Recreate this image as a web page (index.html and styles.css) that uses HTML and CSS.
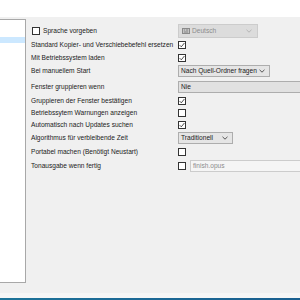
FILE: index.html
```html
<!DOCTYPE html>
<html lang="de">
<head>
<meta charset="utf-8">
<title>Optionen</title>
<link rel="stylesheet" href="styles.css">
</head>
<body>
<div class="window">
  <div class="topband"></div>
  <div class="content">
    <div class="tree">
      <div class="tree-item"></div>
    </div>
    <div class="form">
      <div class="label"><span class="check"></span><span>Sprache vorgeben</span></div>
      <div class="ctrl">
        <div class="combo combo-lang disabled">
          <svg class="lang-icon" width="8" height="6" viewBox="0 0 8 6"><rect x="0.5" y="0.5" width="7" height="5" fill="#c4c4c4" stroke="#8a8a8a"/><path d="M2 2h1M4 2h2M2 4h4" stroke="#7a7a7a" stroke-width="0.8"/></svg>
          <span class="combo-text">Deutsch</span>
          <svg class="chev" width="6" height="4" viewBox="0 0 6 4"><path d="M0.5 0.8 3 3.2 5.5 0.8" fill="none" stroke="#b0b0b0" stroke-width="0.9"/></svg>
        </div>
      </div>

      <div class="label">Standard Kopier- und Verschiebebefehl ersetzen</div>
      <div class="ctrl"><span class="check checked"><svg width="6" height="6" viewBox="0 0 6 6"><path d="M0.6 3.1 2.3 4.8 5.4 1" fill="none" stroke="#222" stroke-width="0.8"/></svg></span></div>

      <div class="label">Mit Betriebssystem laden</div>
      <div class="ctrl"><span class="check checked"><svg width="6" height="6" viewBox="0 0 6 6"><path d="M0.6 3.1 2.3 4.8 5.4 1" fill="none" stroke="#222" stroke-width="0.8"/></svg></span></div>

      <div class="label">Bei manuellem Start</div>
      <div class="ctrl">
        <div class="combo combo-ask">
          <span class="combo-text">Nach Quell-Ordner fragen</span>
          <svg class="chev" width="6" height="4" viewBox="0 0 6 4"><path d="M0.5 0.8 3 3.2 5.5 0.8" fill="none" stroke="#444" stroke-width="0.9"/></svg>
        </div>
      </div>

      <div class="label">Fenster gruppieren wenn</div>
      <div class="ctrl">
        <div class="combo combo-wide"><span class="combo-text">Nie</span></div>
      </div>

      <div class="label">Gruppieren der Fenster bestätigen</div>
      <div class="ctrl"><span class="check checked"><svg width="6" height="6" viewBox="0 0 6 6"><path d="M0.6 3.1 2.3 4.8 5.4 1" fill="none" stroke="#222" stroke-width="0.8"/></svg></span></div>

      <div class="label">Betriebssytem Warnungen anzeigen</div>
      <div class="ctrl"><span class="check"></span></div>

      <div class="label">Automatisch nach Updates suchen</div>
      <div class="ctrl"><span class="check checked"><svg width="6" height="6" viewBox="0 0 6 6"><path d="M0.6 3.1 2.3 4.8 5.4 1" fill="none" stroke="#222" stroke-width="0.8"/></svg></span></div>

      <div class="label">Algorithmus für verbleibende Zeit</div>
      <div class="ctrl">
        <div class="combo combo-algo">
          <span class="combo-text">Traditionell</span>
          <svg class="chev" width="6" height="4" viewBox="0 0 6 4"><path d="M0.5 0.8 3 3.2 5.5 0.8" fill="none" stroke="#444" stroke-width="0.9"/></svg>
        </div>
      </div>

      <div class="label">Portabel machen (Benötigt Neustart)</div>
      <div class="ctrl"><span class="check"></span></div>

      <div class="label">Tonausgabe wenn fertig</div>
      <div class="ctrl ctrl-sound">
        <span class="check"></span>
        <div class="textbox">finish.opus</div>
      </div>
    </div>
  </div>
  <div class="strip"></div>
  <div class="taskbar"></div>
</div>
</body>
</html>
```

FILE: styles.css
```css
html, body {
  margin: 0;
  padding: 0;
  width: 300px;
  height: 300px;
  overflow: hidden;
  background: #f0f0f0;
}

.window {
  width: 300px;
  height: 300px;
  display: flex;
  flex-direction: column;
  font-family: "Liberation Sans", Arial, sans-serif;
  font-size: 6.6px;
  color: #1b1b1b;
}

.topband {
  height: 17px;
  background: #ffffff;
  flex: none;
}

.content {
  height: 276px;
  flex: none;
  display: flex;
  align-items: flex-start;
}

.tree {
  margin-top: 2px;
  width: 26px;
  height: 264px;
  box-sizing: border-box;
  background: #ffffff;
  border-top: 1px solid #a8a8a8;
  border-right: 1px solid #a8a8a8;
  border-bottom: 1px solid #a8a8a8;
  flex: none;
}

.tree-item {
  margin-top: 17px;
  height: 6px;
  background: #cce8ff;
}

.form {
  margin-left: 5px;
  padding-top: 7px;
  display: grid;
  grid-template-columns: 147px 122px;
  grid-template-rows: 14px 14px 12px 14px 17px 11px 14px 10px 16px 12px 16px;
  align-items: center;
}

.label {
  display: flex;
  align-items: center;
  white-space: nowrap;
  line-height: 8px;
}

.label .check {
  margin-left: 1px;
  margin-right: 3px;
}

.ctrl {
  display: flex;
  align-items: center;
}

.check {
  width: 8px;
  height: 8px;
  box-sizing: border-box;
  border: 1px solid #333333;
  background: #ffffff;
  display: inline-flex;
  align-items: center;
  justify-content: center;
  flex: none;
}

.check svg {
  display: block;
}

.combo {
  height: 12px;
  box-sizing: border-box;
  border: 1px solid #adadad;
  background: #e5e5e5;
  display: flex;
  align-items: center;
  padding: 0 4px 0 2px;
  white-space: nowrap;
}

.combo-text {
  flex: 1;
  line-height: 8px;
}

.chev {
  display: block;
  flex: none;
}

.combo-lang {
  width: 80px;
  height: 14px;
  background: #dcdcdc;
  border-color: #cccccc;
  color: #8c8c8c;
  padding-left: 3px;
  padding-right: 5px;
}

.lang-icon {
  display: block;
  margin-right: 2px;
  flex: none;
}

.combo-ask {
  width: 92px;
}

.combo-wide {
  width: 122px;
  background: #e1e1e1;
  border-right: none;
}

.combo-algo {
  width: 55px;
}

.ctrl-sound {
  gap: 4px;
}

.textbox {
  flex: 1;
  min-width: 0;
  height: 12px;
  box-sizing: border-box;
  border: 1px solid #cccccc;
  border-right: none;
  background: #f5f5f5;
  color: #8c8c8c;
  padding-left: 2px;
  line-height: 10px;
  white-space: nowrap;
}

.strip {
  height: 5px;
  background: #f6f6f6;
  flex: none;
}

.taskbar {
  height: 2px;
  background: linear-gradient(to right, #1d7398, #1c6a96 40%, #1a5f8f);
  flex: none;
}
```
